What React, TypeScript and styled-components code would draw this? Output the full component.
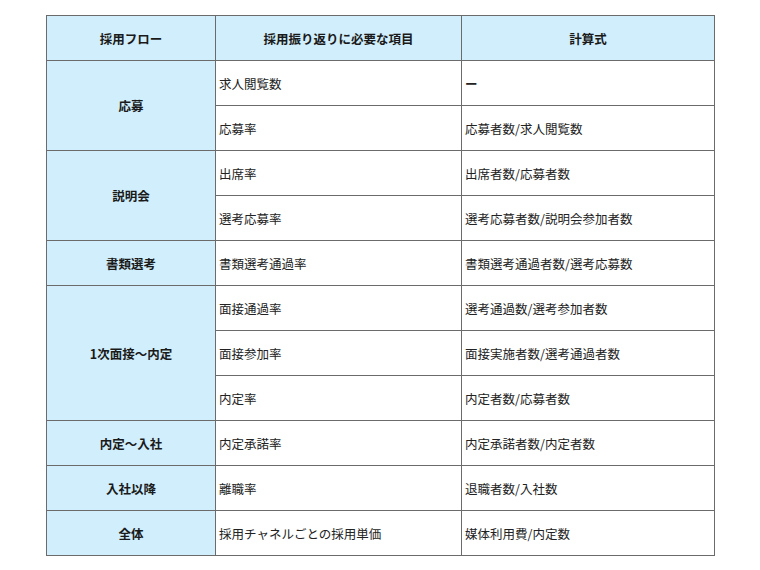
import React from 'react';
import styled, { createGlobalStyle } from 'styled-components';

const GlobalStyle = createGlobalStyle`
  body {
    margin: 0;
    background: #ffffff;
    font-family: "Noto Sans CJK JP", "Noto Sans", sans-serif;
  }
`;

const Page = styled.div`
  padding: 15px 46px;
`;

const Table = styled.table`
  width: 668px;
  border-collapse: collapse;
  border: 1px solid #6b6b6b;
  table-layout: fixed;
`;

const Th = styled.th`
  height: 44px;
  padding: 0 4px;
  background: #d0eefc;
  border: 1px solid #6b6b6b;
  font-size: 12.5px;
  font-weight: 700;
  color: #1a1a1a;
  text-align: center;
`;

const FlowCell = styled.td`
  padding: 0 4px;
  background: #d0eefc;
  border: 1px solid #6b6b6b;
  font-size: 12.5px;
  font-weight: 700;
  color: #1a1a1a;
  text-align: center;
`;

const Cell = styled.td<{ $bold?: boolean }>`
  height: 44px;
  padding: 0 3px;
  border: 1px solid #6b6b6b;
  font-size: 12.5px;
  font-weight: ${(p) => (p.$bold ? 700 : 400)};
  color: #222;
  text-align: left;
`;

interface Group {
  flow: string;
  items: [string, string][];
}

const groups: Group[] = [
  { flow: '応募', items: [['求人閲覧数', 'ー'], ['応募率', '応募者数/求人閲覧数']] },
  { flow: '説明会', items: [['出席率', '出席者数/応募者数'], ['選考応募率', '選考応募者数/説明会参加者数']] },
  { flow: '書類選考', items: [['書類選考通過率', '書類選考通過者数/選考応募数']] },
  {
    flow: '1次面接〜内定',
    items: [
      ['面接通過率', '選考通過数/選考参加者数'],
      ['面接参加率', '面接実施者数/選考通過者数'],
      ['内定率', '内定者数/応募者数'],
    ],
  },
  { flow: '内定〜入社', items: [['内定承諾率', '内定承諾者数/内定者数']] },
  { flow: '入社以降', items: [['離職率', '退職者数/入社数']] },
  { flow: '全体', items: [['採用チャネルごとの採用単価', '媒体利用費/内定数']] },
];

export default function App() {
  return (
    <Page>
      <GlobalStyle />
      <Table>
        <colgroup>
          <col style={{ width: 169 }} />
          <col style={{ width: 246 }} />
          <col style={{ width: 253 }} />
        </colgroup>
        <thead>
          <tr>
            <Th>採用フロー</Th>
            <Th>採用振り返りに必要な項目</Th>
            <Th>計算式</Th>
          </tr>
        </thead>
        <tbody>
          {groups.map((g) =>
            g.items.map(([item, formula], i) => (
              <tr key={g.flow + i}>
                {i === 0 && <FlowCell rowSpan={g.items.length}>{g.flow}</FlowCell>}
                <Cell>{item}</Cell>
                <Cell $bold={formula === 'ー'}>{formula}</Cell>
              </tr>
            ))
          )}
        </tbody>
      </Table>
    </Page>
  );
}
